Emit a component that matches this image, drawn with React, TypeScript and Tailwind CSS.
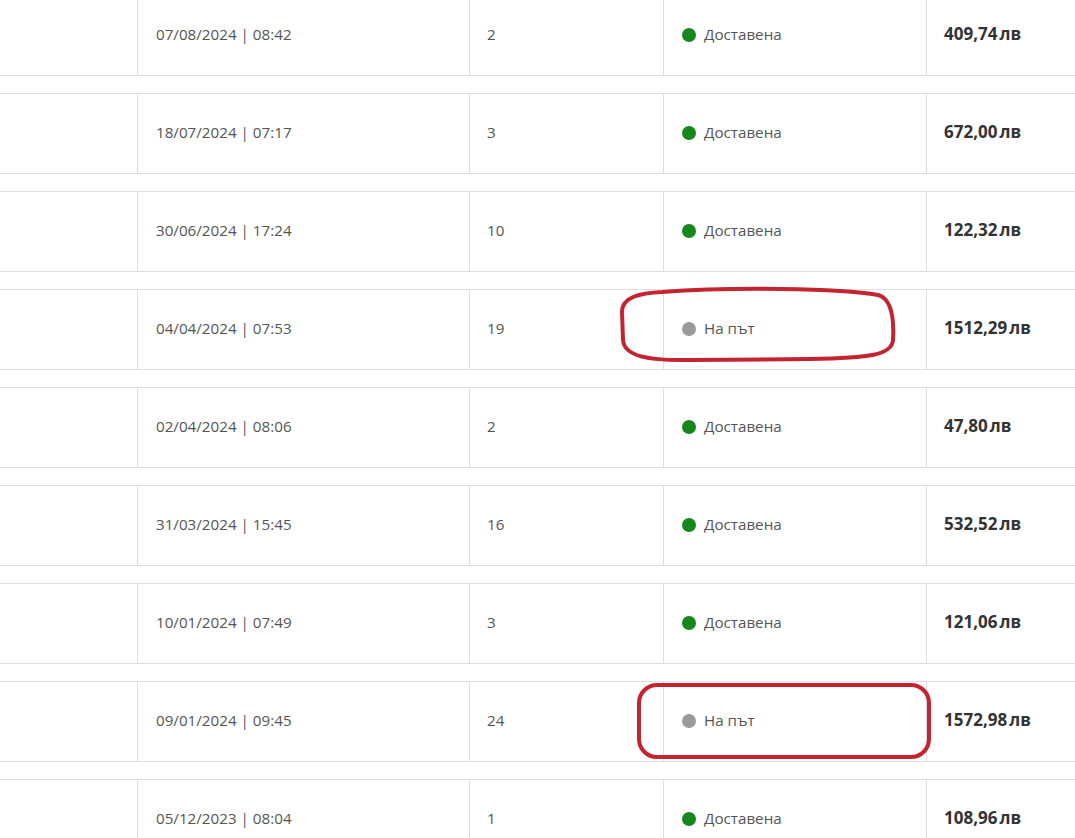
import React from "react"

type Order = {
  date: string
  items: number
  status: "delivered" | "transit"
  total: string
}

const orders: Order[] = [
  { date: "07/08/2024 | 08:42", items: 2, status: "delivered", total: "409,74" },
  { date: "18/07/2024 | 07:17", items: 3, status: "delivered", total: "672,00" },
  { date: "30/06/2024 | 17:24", items: 10, status: "delivered", total: "122,32" },
  { date: "04/04/2024 | 07:53", items: 19, status: "transit", total: "1512,29" },
  { date: "02/04/2024 | 08:06", items: 2, status: "delivered", total: "47,80" },
  { date: "31/03/2024 | 15:45", items: 16, status: "delivered", total: "532,52" },
  { date: "10/01/2024 | 07:49", items: 3, status: "delivered", total: "121,06" },
  { date: "09/01/2024 | 09:45", items: 24, status: "transit", total: "1572,98" },
  { date: "05/12/2023 | 08:04", items: 1, status: "delivered", total: "108,96" },
]

function OrderRow({ order }: { order: Order }) {
  const delivered = order.status === "delivered"
  return (
    <div className="grid h-[81px] grid-cols-[137px_332px_194px_263px_1fr] border-y border-[#dedede] bg-white text-[15.2px] leading-[20px] text-[#555]">
      <div />
      <div className="flex items-center border-l border-[#dedede] pb-[3px] pl-[18px]">{order.date}</div>
      <div className="flex items-center border-l border-[#dedede] pb-[3px] pl-[17px]">{order.items}</div>
      <div className="flex items-center gap-[8px] border-l border-[#dedede] pb-[3px] pl-[18px]">
        <span className={delivered ? "mt-[1px] h-[14px] w-[14px] rounded-full bg-[#15871b]" : "mt-[1px] h-[14px] w-[14px] rounded-full bg-[#9a9a9a]"} />
        {delivered ? "Доставена" : "На път"}
      </div>
      <div className="flex items-center border-l border-[#dedede] pb-[3px] pl-[17px] text-[17px] font-bold text-[#333]">
        {order.total}
        <span className="ml-[2px]">лв</span>
      </div>
    </div>
  )
}

export default function App() {
  return (
    <div className="relative h-[838px] w-[1075px] overflow-hidden bg-white" style={{ fontFamily: '"Open Sans", "Noto Sans", sans-serif' }}>
      <div className="-mt-[5px] flex flex-col gap-[17px]">
        {orders.map((o) => (
          <OrderRow key={o.date} order={o} />
        ))}
      </div>

      {/* red marker annotations */}
      <svg className="pointer-events-none absolute inset-0" width="1075" height="838" fill="none">
        <path
          d="M662 292 C730 287 840 288 878 295 C893 299 894 322 893 340 C892 355 870 358 810 359 L690 360 C648 361 624 356 623 340 L622 312 C622 297 640 293 662 292 Z"
          stroke="#c3242f"
          strokeWidth="4"
        />
        <rect x="639" y="685" width="290" height="72" rx="18" stroke="#c3242f" strokeWidth="4" />
      </svg>
    </div>
  )
}
